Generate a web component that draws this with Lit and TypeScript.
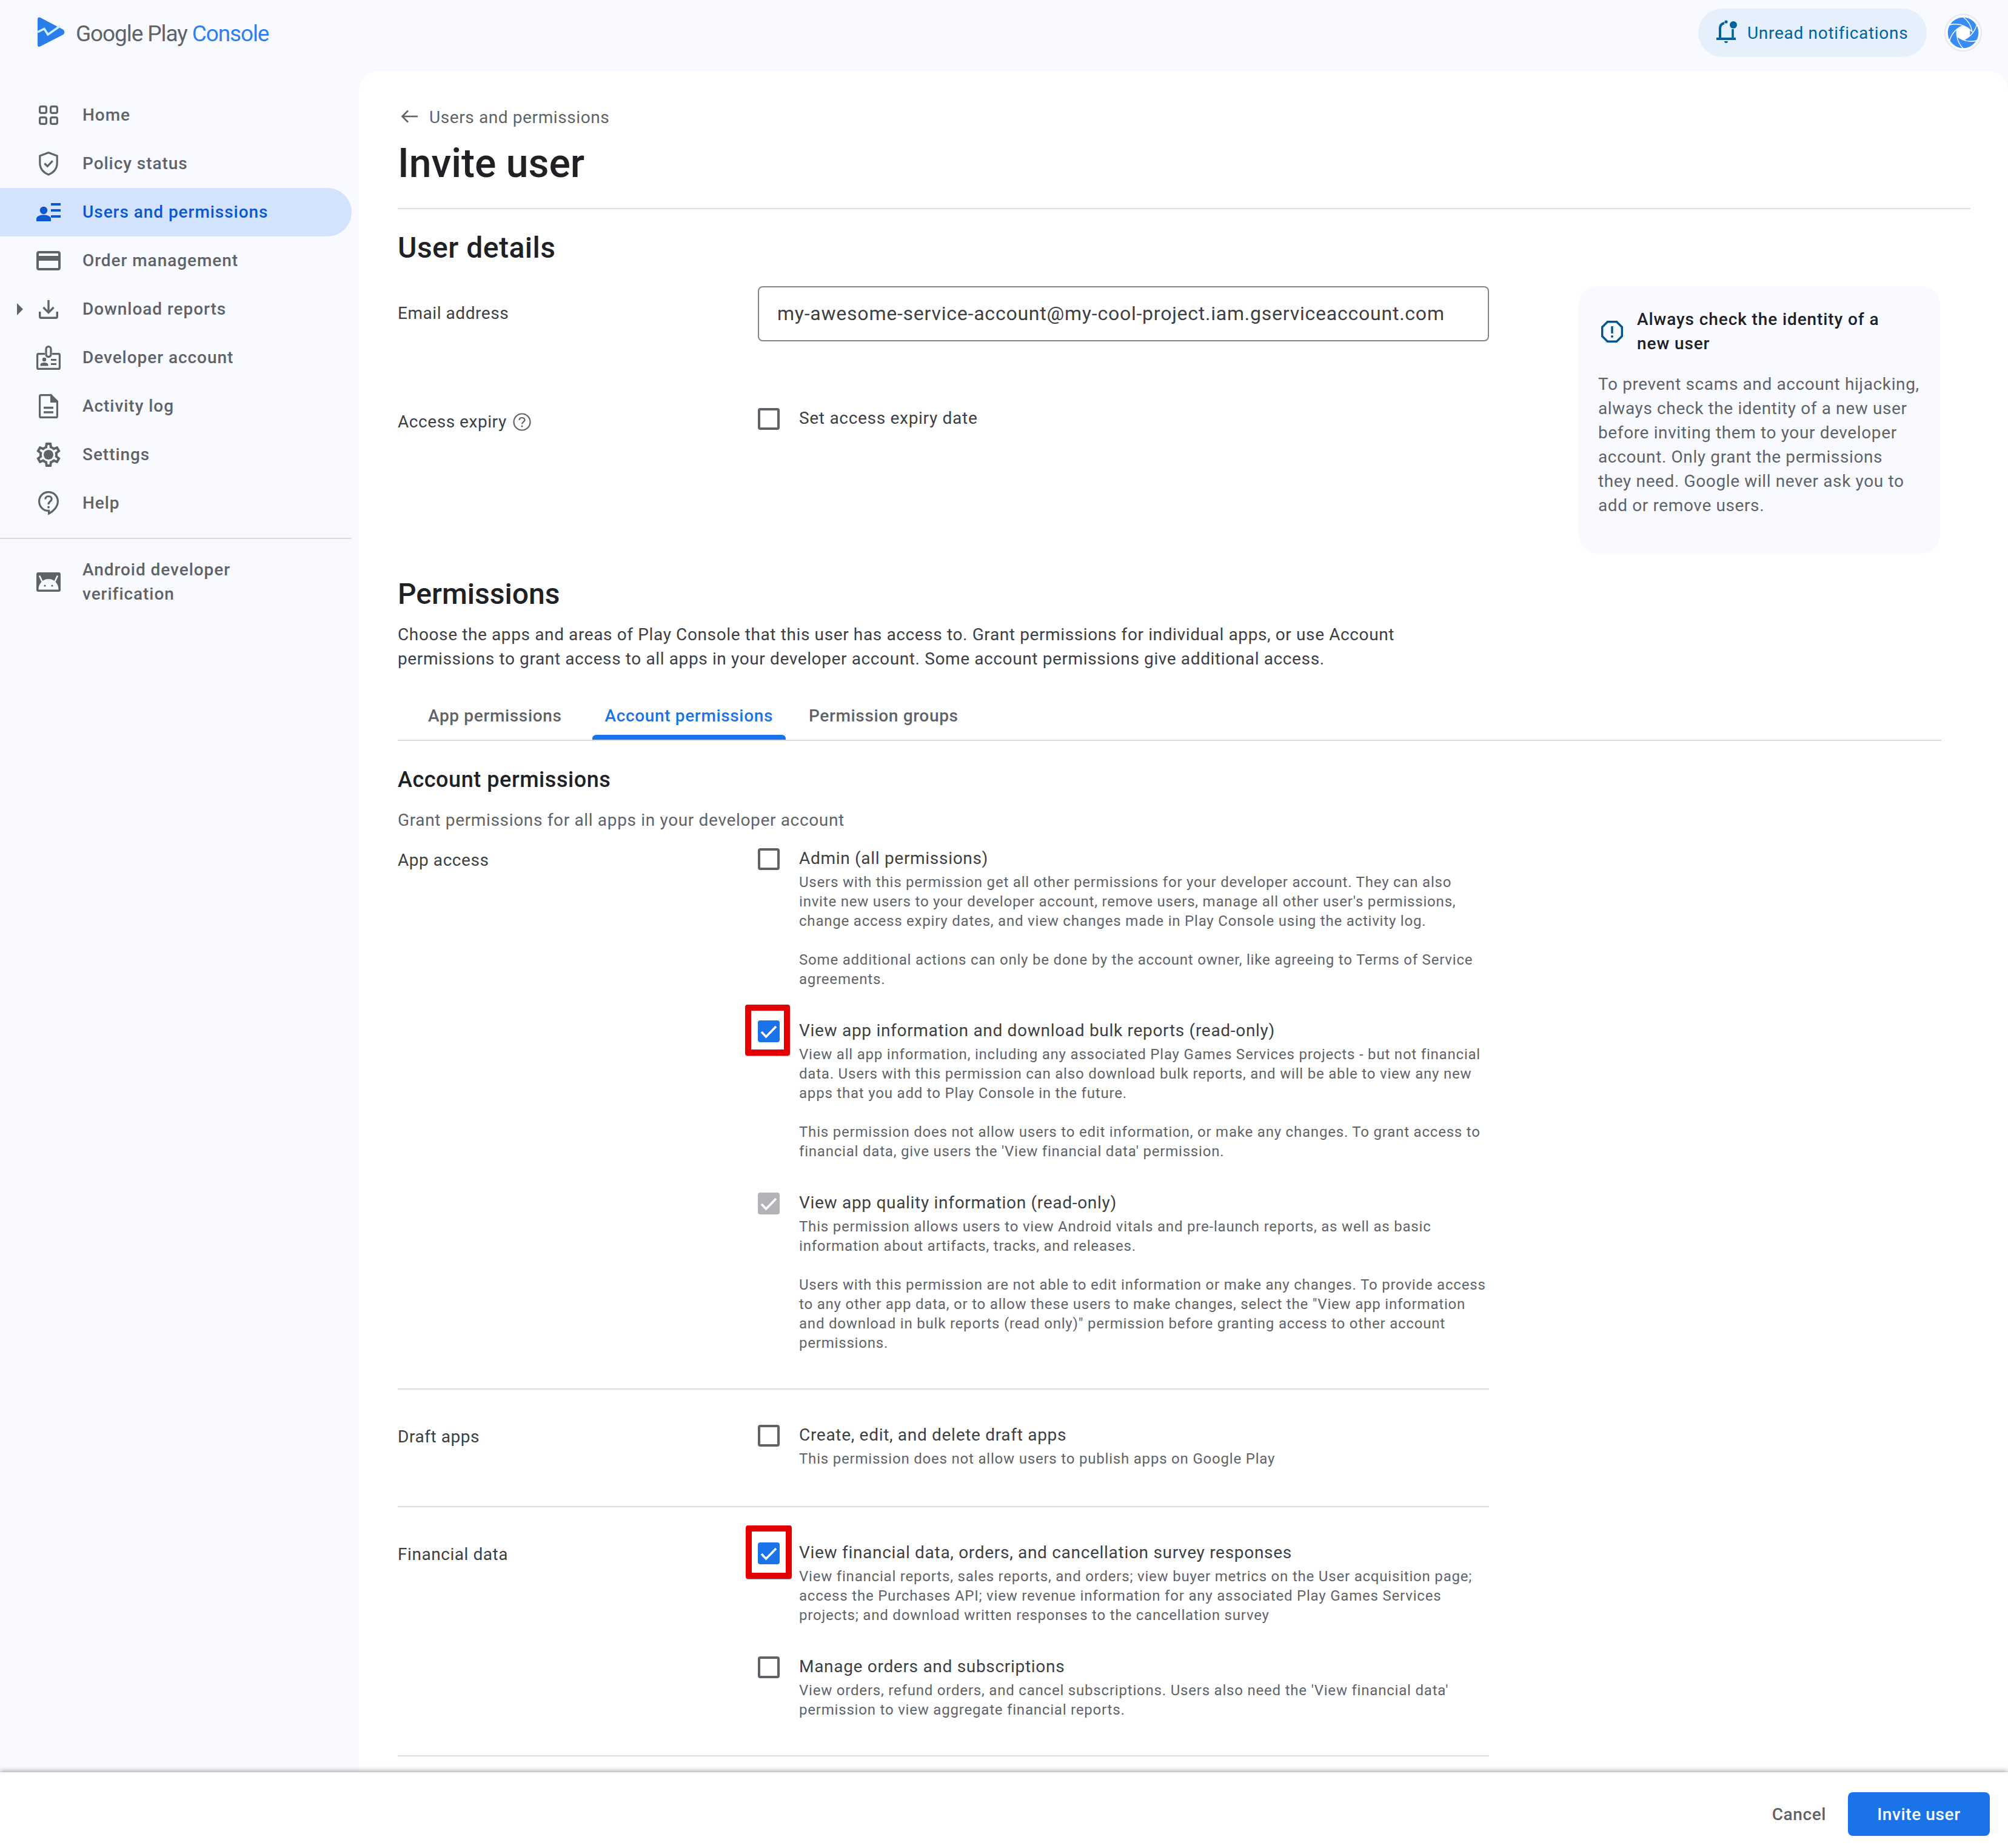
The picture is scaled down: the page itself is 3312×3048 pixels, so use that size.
import { LitElement, html, svg, css, nothing } from 'lit';
import { customElement } from 'lit/decorators.js';

const navIcons: Record<string, unknown> = {
  home: html`<svg width="32" height="32" viewBox="0 0 32 32" fill="none" stroke="currentColor" stroke-width="3.2">
    <rect x="1.6" y="1.6" width="10.8" height="10.8" rx="2.5"/><rect x="19.6" y="1.6" width="10.8" height="10.8" rx="2.5"/>
    <rect x="1.6" y="19.6" width="10.8" height="10.8" rx="2.5"/><rect x="19.6" y="19.6" width="10.8" height="10.8" rx="2.5"/></svg>`,
  policy: html`<svg width="32" height="40" viewBox="0 0 32 40" fill="none" stroke="currentColor" stroke-width="3.2">
    <path d="M16 1.8 L30.2 7 V19 C30.2 28 24.4 35 16 38 C7.6 35 1.8 28 1.8 19 V7 Z"/><path d="M9.5 19.5 l4.8 4.8 l8.4 -9"/></svg>`,
  users: html`<svg width="40" height="30" viewBox="0 0 40 30" fill="currentColor">
    <circle cx="12" cy="12" r="6.2"/><path d="M0 30 V26 C0 21 7 19.5 12 19.5 C17 19.5 24 21 24 26 V30 Z"/>
    <rect x="24" y="0" width="16" height="4"/><rect x="24" y="10" width="16" height="4"/><rect x="24" y="20" width="16" height="4"/></svg>`,
  order: html`<svg width="40" height="32" viewBox="2 4 20 16" fill="currentColor">
    <path d="M20 4H4c-1.11 0-1.99.89-1.99 2L2 18c0 1.11.89 2 2 2h16c1.11 0 2-.89 2-2V6c0-1.11-.89-2-2-2zm0 14H4v-6h16v6zm0-10H4V6h16v2z"/></svg>`,
  download: html`<svg width="32" height="31" viewBox="0 0 32 31" fill="none" stroke="currentColor" stroke-width="3.4">
    <path d="M16 0 V20"/><path d="M7.5 12 L16 20.5 L24.5 12"/><path d="M1.7 19 V27 Q1.7 29.3 4 29.3 H28 Q30.3 29.3 30.3 27 V19"/></svg>`,
  account: html`<svg width="40" height="40" viewBox="0 0 40 40" fill="none" stroke="currentColor" stroke-width="3.2">
    <path d="M14 13.6 H3.6 Q1.6 13.6 1.6 15.6 V36.4 Q1.6 38.4 3.6 38.4 H36.4 Q38.4 38.4 38.4 36.4 V15.6 Q38.4 13.6 36.4 13.6 H26"/>
    <rect x="16" y="1.6" width="8" height="17" rx="4"/>
    <g fill="currentColor" stroke="none"><circle cx="13" cy="23" r="3.2"/><path d="M6.5 33.5 V31.5 C6.5 29 10 28 13 28 C16 28 19.5 29 19.5 31.5 V33.5 Z"/>
    <rect x="24" y="22" width="9" height="3"/><rect x="24" y="29" width="9" height="3"/></g></svg>`,
  activity: html`<svg width="32" height="40" viewBox="0 0 32 40" fill="none" stroke="currentColor" stroke-width="3.2">
    <path d="M20 1.6 H3.6 Q1.6 1.6 1.6 3.6 V36.4 Q1.6 38.4 3.6 38.4 H28.4 Q30.4 38.4 30.4 36.4 V12 Z"/>
    <path d="M20 1.6 L30.4 12 H20 Z" fill="currentColor" stroke="none"/><path d="M20 1.6 V13 H30.4" stroke-width="2"/>
    <path d="M8 22.5 H24 M8 30 H24" stroke-width="3.4"/></svg>`,
  settings: html`<svg width="40" height="40" viewBox="2 2 20 20" fill="currentColor">
    <path d="M19.43 12.98c.04-.32.07-.64.07-.98 0-.34-.03-.66-.07-.98l2.11-1.65c.19-.15.24-.42.12-.64l-2-3.46c-.09-.16-.26-.25-.44-.25-.06 0-.12.01-.17.03l-2.49 1c-.52-.4-1.08-.73-1.69-.98l-.38-2.65C14.46 2.18 14.25 2 14 2h-4c-.25 0-.46.18-.49.42l-.38 2.65c-.61.25-1.17.59-1.69.98l-2.49-1c-.06-.02-.12-.03-.18-.03-.17 0-.34.09-.43.25l-2 3.46c-.13.22-.07.49.12.64l2.11 1.65c-.04.32-.07.65-.07.98 0 .33.03.66.07.98l-2.11 1.65c-.19.15-.24.42-.12.64l2 3.46c.09.16.26.25.44.25.06 0 .12-.01.17-.03l2.49-1c.52.4 1.08.73 1.69.98l.38 2.65c.03.24.24.42.49.42h4c.25 0 .46-.18.49-.42l.38-2.65c.61-.25 1.17-.59 1.69-.98l2.49 1c.06.02.12.03.18.03.17 0 .34-.09.43-.25l2-3.46c.12-.22.07-.49-.12-.64l-2.11-1.65zm-1.98-1.71c.04.31.05.52.05.73 0 .21-.02.43-.05.73l-.14 1.13.89.7 1.08.84-.7 1.21-1.27-.51-1.04-.42-.9.68c-.43.32-.84.56-1.25.73l-1.06.43-.16 1.13-.2 1.35h-1.4l-.19-1.35-.16-1.13-1.06-.43c-.43-.18-.83-.41-1.23-.71l-.91-.7-1.06.43-1.27.51-.7-1.21 1.08-.84.89-.7-.14-1.13c-.03-.31-.05-.54-.05-.74s.02-.43.05-.73l.14-1.13-.89-.7-1.08-.84.7-1.21 1.27.51 1.04.42.9-.68c.43-.32.84-.56 1.25-.73l1.06-.43.16-1.13.2-1.35h1.39l.19 1.35.16 1.13 1.06.43c.43.18.83.41 1.23.71l.91.7 1.06-.43 1.27-.51.7 1.21-1.07.85-.89.7.14 1.13zM12 8c-2.21 0-4 1.79-4 4s1.79 4 4 4 4-1.79 4-4-1.79-4-4-4z"/></svg>`,
  help: html`<svg width="34" height="40" viewBox="0 0 34 40" fill="none" stroke="currentColor" stroke-width="3.2">
    <path d="M17 1.6 C8 1.6 1.6 8.6 1.6 17 C1.6 26 9 32.4 16 32.4 H17.6 V37 C26 33 32.4 25 32.4 17 C32.4 8.6 26 1.6 17 1.6 Z"/>
    <path d="M11.8 13.5 C11.8 10.5 14 8.5 17 8.5 C20 8.5 22.2 10.5 22.2 13 C22.2 16.8 17 17 17 22"/>
    <circle cx="17" cy="26.5" r="1.9" fill="currentColor" stroke="none"/></svg>`,
  android: html`<svg width="40" height="32" viewBox="0 0 40 32">
    <rect width="40" height="32" rx="3" fill="currentColor"/>
    <path d="M3.5 28.5 C3.5 18 11 11 20 11 C29 11 36.5 18 36.5 28.5 Z" fill="#f8faff"/>
    <path d="M9.5 15 L5 5.5 M30.5 15 L35 5.5" stroke="#f8faff" stroke-width="2.6"/>
    <circle cx="14" cy="22" r="1.6" fill="currentColor"/><circle cx="26" cy="22" r="1.6" fill="currentColor"/></svg>`,
};

const navItems = [
  { key: 'home', label: 'Home' },
  { key: 'policy', label: 'Policy status' },
  { key: 'users', label: 'Users and permissions', active: true },
  { key: 'order', label: 'Order management' },
  { key: 'download', label: 'Download reports', caret: true },
  { key: 'account', label: 'Developer account' },
  { key: 'activity', label: 'Activity log' },
  { key: 'settings', label: 'Settings' },
  { key: 'help', label: 'Help' },
];

const blade = 'M0 -26 A26 26 0 0 1 22.5 -13 Q21 2 9 12 Q15 -10 0 -26 Z';

type Perm = { title: string; state: 'off' | 'on' | 'disabled'; mark?: string; lines: string[] };
type Group = { label: string; cls?: string; perms: Perm[] };

const groups: Group[] = [
  {
    label: 'App access',
    perms: [
      {
        title: 'Admin (all permissions)',
        state: 'off',
        lines: [
          'Users with this permission get all other permissions for your developer account. They can also',
          "invite new users to your developer account, remove users, manage all other user's permissions,",
          'change access expiry dates, and view changes made in Play Console using the activity log.',
          '',
          'Some additional actions can only be done by the account owner, like agreeing to Terms of Service',
          'agreements.',
        ],
      },
      {
        title: 'View app information and download bulk reports (read-only)',
        state: 'on',
        mark: 'mark-a',
        lines: [
          'View all app information, including any associated Play Games Services projects - but not financial',
          'data. Users with this permission can also download bulk reports, and will be able to view any new',
          'apps that you add to Play Console in the future.',
          '',
          'This permission does not allow users to edit information, or make any changes. To grant access to',
          "financial data, give users the 'View financial data' permission.",
        ],
      },
      {
        title: 'View app quality information (read-only)',
        state: 'disabled',
        lines: [
          'This permission allows users to view Android vitals and pre-launch reports, as well as basic',
          'information about artifacts, tracks, and releases.',
          '',
          'Users with this permission are not able to edit information or make any changes. To provide access',
          'to any other app data, or to allow these users to make changes, select the "View app information',
          'and download in bulk reports (read only)" permission before granting access to other account',
          'permissions.',
        ],
      },
    ],
  },
  {
    label: 'Draft apps',
    cls: 'draft',
    perms: [
      {
        title: 'Create, edit, and delete draft apps',
        state: 'off',
        lines: ['This permission does not allow users to publish apps on Google Play'],
      },
    ],
  },
  {
    label: 'Financial data',
    perms: [
      {
        title: 'View financial data, orders, and cancellation survey responses',
        state: 'on',
        mark: 'mark-b',
        lines: [
          'View financial reports, sales reports, and orders; view buyer metrics on the User acquisition page;',
          'access the Purchases API; view revenue information for any associated Play Games Services',
          'projects; and download written responses to the cancellation survey',
        ],
      },
      {
        title: 'Manage orders and subscriptions',
        state: 'off',
        lines: [
          "View orders, refund orders, and cancel subscriptions. Users also need the 'View financial data'",
          'permission to view aggregate financial reports.',
        ],
      },
    ],
  },
];

@customElement('app-root')
export class AppRoot extends LitElement {
  static override styles = css`
    :host {
      display: flex;
      flex-direction: column;
      width: 3312px;
      height: 3048px;
      overflow: hidden;
      background: #f8faff;
      font-family: Roboto, 'Liberation Sans', sans-serif;
      color: #5f6368;
    }
    svg {
      display: block;
      flex: none;
    }

    /* top bar */
    .topbar {
      height: 118px;
      flex: none;
      display: flex;
      align-items: center;
      position: relative;
    }
    .logo {
      display: flex;
      align-items: center;
      gap: 18px;
      margin-left: 62px;
      margin-top: -12px;
    }
    .wordmark {
      font-size: 37px;
      letter-spacing: -1.1px;
      margin-top: 4px;
      color: #5f6368;
      white-space: nowrap;
    }
    .wordmark span {
      color: #2f80ed;
    }
    .top-actions {
      margin-left: auto;
      display: flex;
      align-items: center;
      margin-top: -10px;
      margin-right: 42px;
      gap: 28px;
    }
    .notif {
      display: flex;
      align-items: center;
      gap: 13px;
      height: 80px;
      width: 377px;
      box-sizing: border-box;
      padding-left: 30px;
      border-radius: 40px;
      background: #e6f0fd;
      color: #00639b;
      font-size: 28px;
      letter-spacing: 0.7px;
      white-space: nowrap;
    }

    /* middle */
    .middle {
      flex: 1;
      min-height: 0;
      display: flex;
      overflow: hidden;
    }
    .side {
      width: 592px;
      flex: none;
      padding-top: 32px;
      box-sizing: border-box;
    }
    .nav-item {
      display: flex;
      align-items: center;
      width: 580px;
      height: 80px;
      box-sizing: border-box;
      padding-left: 28px;
      border-radius: 0 40px 40px 0;
      font-size: 28px;
      font-weight: 500;
      letter-spacing: 0.95px;
      line-height: 40px;
      color: #5f6368;
      white-space: nowrap;
    }
    .nav-item.active {
      background: #d3e3fd;
      color: #0b57d0;
    }
    .caret {
      width: 32px;
      flex: none;
    }
    .nav-icon {
      width: 40px;
      flex: none;
      margin-right: 36px;
      display: flex;
      justify-content: center;
    }
    .side-rule {
      width: 580px;
      height: 2px;
      background: #dadce0;
      margin: 17px 0 31px;
    }

    .main {
      flex: 1;
      min-width: 0;
      background: #fff;
      border-radius: 32px 32px 0 0;
      box-sizing: border-box;
      padding: 54px 62px 0 64px;
    }
    .back {
      display: flex;
      align-items: center;
      gap: 19px;
      height: 40px;
      padding-left: 5px;
      font-size: 28px;
      letter-spacing: 0.6px;
      color: #5f6368;
    }
    .back span {
      padding-top: 2px;
    }
    h1 {
      margin: 18px 0 33px;
      font-size: 66px;
      font-weight: 500;
      line-height: 80px;
      color: #202124;
    }
    .rule {
      height: 2px;
      background: #dadce0;
    }
    h2 {
      margin: 0;
      font-size: 48px;
      font-weight: 500;
      line-height: 56px;
      color: #202124;
    }
    .details-title {
      margin: 36px 0 35px;
      letter-spacing: 0.5px;
    }
    .details {
      display: flex;
      height: 442px;
      margin-bottom: 38px;
    }
    .details-left {
      width: 1800px;
      flex: none;
    }
    .row {
      display: flex;
    }
    .row-label {
      width: 594px;
      flex: none;
      font-size: 28px;
      letter-spacing: 0.55px;
      line-height: 40px;
      color: #3c4043;
    }
    .email-label {
      padding-top: 25px;
    }
    .input {
      width: 1206px;
      height: 91px;
      box-sizing: border-box;
      border: 2px solid #80868b;
      border-radius: 8px;
      padding-left: 30px;
      font-size: 32px;
      letter-spacing: 0.77px;
      line-height: 87px;
      color: #3c4043;
      white-space: nowrap;
    }
    .expiry {
      margin-top: 105px;
    }
    .expiry-label {
      display: flex;
      align-items: center;
      gap: 10px;
      padding-top: 8px;
      height: 40px;
    }
    .card {
      margin-left: 147px;
      width: 597px;
      height: 441px;
      box-sizing: border-box;
      background: #f8faff;
      border-radius: 32px;
      padding: 35px 0 0 33px;
      font-size: 28px;
      line-height: 40px;
    }
    .card-head {
      display: flex;
      align-items: center;
      gap: 23px;
      padding-left: 5px;
      font-weight: 500;
      letter-spacing: 0.9px;
      color: #202124;
      white-space: nowrap;
      margin-bottom: 27px;
    }
    .card-body {
      color: #5f6368;
      letter-spacing: 0.62px;
      white-space: nowrap;
    }
    .intro {
      margin: 19px 0 0;
      font-size: 28px;
      letter-spacing: 0.62px;
      line-height: 40px;
      color: #3c4043;
      white-space: nowrap;
    }
    .tabs {
      display: flex;
      width: 2546px;
      height: 80px;
      box-sizing: border-box;
      margin-top: 35px;
      border-bottom: 2px solid #dadce0;
      font-size: 28px;
      font-weight: 500;
      letter-spacing: 0.65px;
      color: #5f6368;
    }
    .tab {
      position: relative;
      display: flex;
      align-items: center;
      height: 78px;
      box-sizing: border-box;
      padding: 0 21px 2px;
      white-space: nowrap;
    }
    .tab:nth-child(1) {
      margin: 0 29px;
    }
    .tab:nth-child(2) {
      margin-right: 17px;
    }
    .tab.active {
      color: #1a73e8;
    }
    .tab.active::after {
      content: '';
      position: absolute;
      left: 0;
      right: 0;
      bottom: 0;
      height: 8px;
      border-radius: 6px 6px 0 0;
      background: #1a73e8;
    }
    h3 {
      margin: 40px 0 23px;
      font-size: 36px;
      font-weight: 500;
      letter-spacing: 0.55px;
      line-height: 48px;
      color: #202124;
    }
    .grant {
      font-size: 28px;
      letter-spacing: 0.66px;
      line-height: 40px;
      color: #5f6368;
    }

    .group {
      display: flex;
      width: 1800px;
      padding: 53px 0 59px;
      border-bottom: 2px solid #dadce0;
    }
    .group.first {
      padding-top: 21px;
    }
    .group.draft {
      padding-bottom: 62px;
    }
    .group-label {
      width: 594px;
      flex: none;
      padding-top: 5px;
      font-size: 28px;
      letter-spacing: 0.55px;
      line-height: 40px;
      color: #3c4043;
    }
    .perms {
      display: flex;
      flex-direction: column;
      gap: 47px;
    }
    .perm {
      display: flex;
      gap: 32px;
    }
    .check-wrap {
      position: relative;
      width: 36px;
      height: 36px;
      flex: none;
      margin-top: 5px;
    }
    .check {
      width: 36px;
      height: 36px;
      box-sizing: border-box;
      border-radius: 4px;
    }
    .check.off {
      border: 4px solid #5f6368;
    }
    .check.on {
      background: #1a73e8;
    }
    .check.disabled {
      background: #b2b4b7;
    }
    .mark {
      position: absolute;
      box-sizing: border-box;
      border: 10px solid #e30000;
      border-radius: 4px;
      box-shadow: 0 1px 1px rgba(0, 0, 0, 0.45);
    }
    .mark-a {
      left: -21px;
      top: -26px;
      width: 74px;
      height: 84px;
    }
    .mark-b {
      left: -20px;
      top: -28px;
      width: 76px;
      height: 88px;
    }
    .perm-title {
      font-size: 28px;
      letter-spacing: 0.7px;
      line-height: 43px;
      color: #3c4043;
      white-space: nowrap;
    }
    .perm-desc {
      margin-top: 2px;
      font-size: 24px;
      letter-spacing: 0.8px;
      line-height: 32px;
      color: #5f6368;
      white-space: nowrap;
    }
    .perm-line {
      min-height: 32px;
    }

    /* footer */
    .footer {
      flex: none;
      height: 125px;
      box-sizing: border-box;
      position: relative;
      display: flex;
      align-items: center;
      justify-content: flex-end;
      gap: 36px;
      padding: 13px 30px 0 0;
      background: #fff;
      box-shadow: 0 -2px 8px rgba(0, 0, 0, 0.35);
      font-size: 28px;
      font-weight: 500;
      letter-spacing: 0.6px;
    }
    .cancel {
      color: #5f6368;
    }
    .primary {
      width: 234px;
      height: 72px;
      display: flex;
      align-items: center;
      justify-content: center;
      background: #1a73e8;
      color: #fff;
      border-radius: 8px;
    }
  `;

  renderNavItem(item: (typeof navItems)[number]) {
    return html`<div class="nav-item ${item.active ? 'active' : ''}">
      <div class="caret">
        ${item.caret
          ? html`<svg width="10" height="20" viewBox="0 0 10 20"><path d="M0 0 L10 10 L0 20 Z" fill="currentColor" /></svg>`
          : nothing}
      </div>
      <div class="nav-icon">${navIcons[item.key]}</div>
      <div>${item.label}</div>
    </div>`;
  }

  renderCheck(state: string, mark?: string) {
    return html`<div class="check-wrap">
      <div class="check ${state}">
        ${state !== 'off'
          ? html`<svg width="36" height="36" viewBox="0 0 36 36" fill="none" stroke="#fff" stroke-width="3.6"><path d="M6 19 L13.5 27 L30 10" /></svg>`
          : nothing}
      </div>
      ${mark ? html`<div class="mark ${mark}"></div>` : nothing}
    </div>`;
  }

  renderPerm(p: Perm) {
    return html`<div class="perm">
      ${this.renderCheck(p.state, p.mark)}
      <div>
        <div class="perm-title">${p.title}</div>
        <div class="perm-desc">${p.lines.map((l) => html`<div class="perm-line">${l}</div>`)}</div>
      </div>
    </div>`;
  }

  override render() {
    return html`
      <div class="topbar">
        <div class="logo">
          <svg width="45" height="50" viewBox="0 0 45 50">
            <path d="M0 4 Q0 -1 4.5 1 L42.5 21 Q46 25 42.5 29 L4.5 48.5 Q0 50.5 0 46 Z" fill="#2b7de9" />
            <path d="M0 25 L11 19.5 L17 29 L37 15" fill="none" stroke="#c9f1ff" stroke-width="3.4" />
          </svg>
          <div class="wordmark">Google Play <span>Console</span></div>
        </div>
        <div class="top-actions">
          <div class="notif">
            <svg width="38" height="42" viewBox="0 0 38 42" fill="none" stroke="currentColor" stroke-width="4">
              <path d="M0 31 H32" />
              <path d="M6 31 V14 C6 9 9 6 13 5" />
              <path d="M27 15 V31" stroke-width="3.6" />
              <circle cx="16" cy="3" r="2.6" fill="currentColor" stroke="none" />
              <circle cx="28" cy="8" r="6" fill="currentColor" stroke="none" />
              <path d="M13 35 H19 A3 3 0 0 1 13 35 Z" fill="currentColor" stroke="none" />
            </svg>
            <span>Unread notifications</span>
          </div>
          <svg width="64" height="64" viewBox="-32 -32 64 64">
            <circle r="30" fill="#fff" stroke="#e8eaed" stroke-width="2.5" />
            ${[0, 60, 120, 180, 240, 300].map(
              (r) => svg`<path d=${blade} fill="#3a8cf5" stroke="#fff" stroke-width="1.4" transform="rotate(${r})" />`
            )}
          </svg>
        </div>
      </div>

      <div class="middle">
        <div class="side">
          ${navItems.map((i) => this.renderNavItem(i))}
          <div class="side-rule"></div>
          <div class="nav-item">
            <div class="caret"></div>
            <div class="nav-icon">${navIcons.android}</div>
            <div>Android developer<br />verification</div>
          </div>
        </div>

        <div class="main">
          <div class="back">
            <svg width="28" height="24" viewBox="0 0 28 24" fill="none" stroke="currentColor" stroke-width="2.6">
              <path d="M28 12 H3" /><path d="M12 2.5 L2.5 12 L12 21.5" />
            </svg>
            <span>Users and permissions</span>
          </div>
          <h1>Invite user</h1>
          <div class="rule"></div>
          <h2 class="details-title">User details</h2>

          <div class="details">
            <div class="details-left">
              <div class="row">
                <div class="row-label email-label">Email address</div>
                <div class="input">my-awesome-service-account@my-cool-project.iam.gserviceaccount.com</div>
              </div>
              <div class="row expiry">
                <div class="row-label expiry-label">
                  <span>Access expiry</span>
                  <svg width="30" height="30" viewBox="0 0 30 30" fill="none" stroke="#5f6368" stroke-width="2.2">
                    <circle cx="15" cy="15" r="13.5" />
                    <path d="M10.5 12 C10.5 9.5 12.5 8 15 8 C17.5 8 19.5 9.5 19.5 11.8 C19.5 14.8 15 15 15 18.5" />
                    <circle cx="15" cy="22" r="1.5" fill="#5f6368" stroke="none" />
                  </svg>
                </div>
                <div class="perm">
                  ${this.renderCheck('off')}
                  <div class="perm-title">Set access expiry date</div>
                </div>
              </div>
            </div>
            <div class="card">
              <div class="card-head">
                <svg width="36" height="36" viewBox="0 0 36 36" fill="none" stroke="#00558f" stroke-width="3.4">
                  <path d="M10.5 1.7 H25.5 L34.3 10.5 V25.5 L25.5 34.3 H10.5 L1.7 25.5 V10.5 Z" />
                  <path d="M18 9 V21" />
                  <circle cx="18" cy="26" r="2" fill="#00558f" stroke="none" />
                </svg>
                <div>Always check the identity of a<br />new user</div>
              </div>
              <div class="card-body">
                To prevent scams and account hijacking,<br />
                always check the identity of a new user<br />
                before inviting them to your developer<br />
                account. Only grant the permissions<br />
                they need. Google will never ask you to<br />
                add or remove users.
              </div>
            </div>
          </div>

          <h2>Permissions</h2>
          <div class="intro">
            Choose the apps and areas of Play Console that this user has access to. Grant permissions for individual apps, or use Account<br />
            permissions to grant access to all apps in your developer account. Some account permissions give additional access.
          </div>
          <div class="tabs">
            <div class="tab">App permissions</div>
            <div class="tab active">Account permissions</div>
            <div class="tab">Permission groups</div>
          </div>
          <h3>Account permissions</h3>
          <div class="grant">Grant permissions for all apps in your developer account</div>

          ${groups.map(
            (g, i) => html`<div class="group ${i === 0 ? 'first' : ''} ${g.cls ?? ''}">
              <div class="group-label">${g.label}</div>
              <div class="perms">${g.perms.map((p) => this.renderPerm(p))}</div>
            </div>`
          )}
        </div>
      </div>

      <div class="footer">
        <div class="cancel">Cancel</div>
        <div class="primary">Invite user</div>
      </div>
    `;
  }
}
